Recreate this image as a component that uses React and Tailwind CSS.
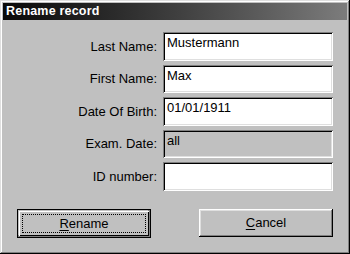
import React from 'react';

const fields = [
  { label: 'Last Name:', value: 'Mustermann' },
  { label: 'First Name:', value: 'Max' },
  { label: 'Date Of Birth:', value: '01/01/1911' },
  { label: 'Exam. Date:', value: 'all', disabled: true },
  { label: 'ID number:', value: '' },
];

export default function App() {
  return (
    <div
      className="w-[350px] h-[254px] bg-[#c0c0c0] p-[3px] flex flex-col shadow-[inset_-1px_-1px_#000,inset_1px_1px_#dfdfdf,inset_-2px_-2px_#808080,inset_2px_2px_#fff]"
      style={{ fontFamily: '"Liberation Sans", Arial, sans-serif' }}
    >
      {/* Title bar */}
      <div className="h-[17px] bg-gradient-to-r from-[#0a0a0a] to-[#7c7c7c] flex items-center pl-[3px]">
        <span className="text-white font-bold text-[12.5px] leading-none tracking-[0.2px]">Rename record</span>
      </div>

      {/* Fields */}
      <div className="mt-[12px] flex flex-col gap-[4px] pr-[14px]">
        {fields.map((f) => (
          <div key={f.label} className="flex items-center justify-end gap-[6px]">
            <span className="text-[13px] text-black leading-none">{f.label}</span>
            <div
              className={`w-[170px] h-[28.5px] px-[4px] pt-[3px] text-[13px] leading-[15px] text-black shadow-[inset_1px_1px_#808080,inset_-1px_-1px_#fff,inset_2px_2px_#000,inset_-2px_-2px_#dfdfdf] ${f.disabled ? 'bg-[#c0c0c0]' : 'bg-white'}`}
            >
              {f.value}
            </div>
          </div>
        ))}
      </div>

      {/* Buttons */}
      <div className="mt-[18px] flex justify-between pl-[14px] pr-[14px]">
        <div className="w-[134px] h-[29px] border border-black bg-[#c0c0c0] p-[1px] shadow-[inset_-2px_-2px_#808080]">
          <div className="w-full h-full shadow-[inset_1px_1px_#fff,inset_-1px_-1px_#000] p-[3px]">
            <div className="w-full h-full border border-dotted border-black flex items-center justify-center text-[13px] text-black leading-none">
              <span><span className="underline underline-offset-2">R</span>ename</span>
            </div>
          </div>
        </div>
        <div className="w-[134px] h-[28px] bg-[#c0c0c0] flex items-center justify-center text-[13px] text-black leading-none shadow-[inset_-1px_-1px_#000,inset_1px_1px_#fff,inset_-2px_-2px_#808080,inset_2px_2px_#dfdfdf]">
          <span><span className="underline underline-offset-2">C</span>ancel</span>
        </div>
      </div>
    </div>
  );
}
